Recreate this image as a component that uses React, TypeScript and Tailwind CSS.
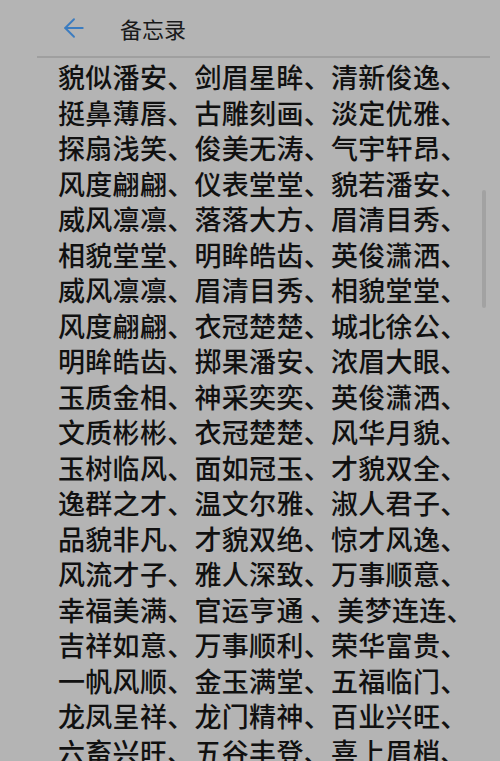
import { ArrowLeft } from 'lucide-react';

const rows = [
  '貌似潘安、剑眉星眸、清新俊逸、',
  '挺鼻薄唇、古雕刻画、淡定优雅、',
  '探扇浅笑、俊美无涛、气宇轩昂、',
  '风度翩翩、仪表堂堂、貌若潘安、',
  '威风凛凛、落落大方、眉清目秀、',
  '相貌堂堂、明眸皓齿、英俊潇洒、',
  '威风凛凛、眉清目秀、相貌堂堂、',
  '风度翩翩、衣冠楚楚、城北徐公、',
  '明眸皓齿、掷果潘安、浓眉大眼、',
  '玉质金相、神采奕奕、英俊潇洒、',
  '文质彬彬、衣冠楚楚、风华月貌、',
  '玉树临风、面如冠玉、才貌双全、',
  '逸群之才、温文尔雅、淑人君子、',
  '品貌非凡、才貌双绝、惊才风逸、',
  '风流才子、雅人深致、万事顺意、',
  '幸福美满、官运亨通 、美梦连连、',
  '吉祥如意、万事顺利、荣华富贵、',
  '一帆风顺、金玉满堂、五福临门、',
  '龙凤呈祥、龙门精神、百业兴旺、',
  '六畜兴旺、五谷丰登、喜上眉梢、',
];

export default function App() {
  return (
    <div
      className="relative h-[761px] w-[500px] overflow-hidden bg-[#b4b4b4]"
      style={{ fontFamily: '"Noto Sans CJK SC", "Noto Sans", sans-serif' }}
    >
      {/* Header */}
      <div className="flex h-[56px] items-center pl-[59px]">
        <ArrowLeft className="h-[30px] w-[30px] text-[#3b7cc0]" strokeWidth={1.5} />
        <span className="ml-[31px] text-[22px] text-[#1a1a1a]">备忘录</span>
      </div>
      <div className="ml-[37px] mr-[10px] h-[2px] bg-[#9f9f9f]" />

      {/* Memo body */}
      <div className="pl-[58px] pt-[1px] text-[27px] font-medium leading-[35.5px] tracking-[0.3px] whitespace-pre text-[#111]">
        {rows.map((row, i) => (
          <div key={i}>{row}</div>
        ))}
      </div>

      {/* Scrollbar */}
      <div className="absolute left-[482px] top-[190px] h-[118px] w-[4px] rounded-full bg-[#a2a2a2]" />
    </div>
  );
}
